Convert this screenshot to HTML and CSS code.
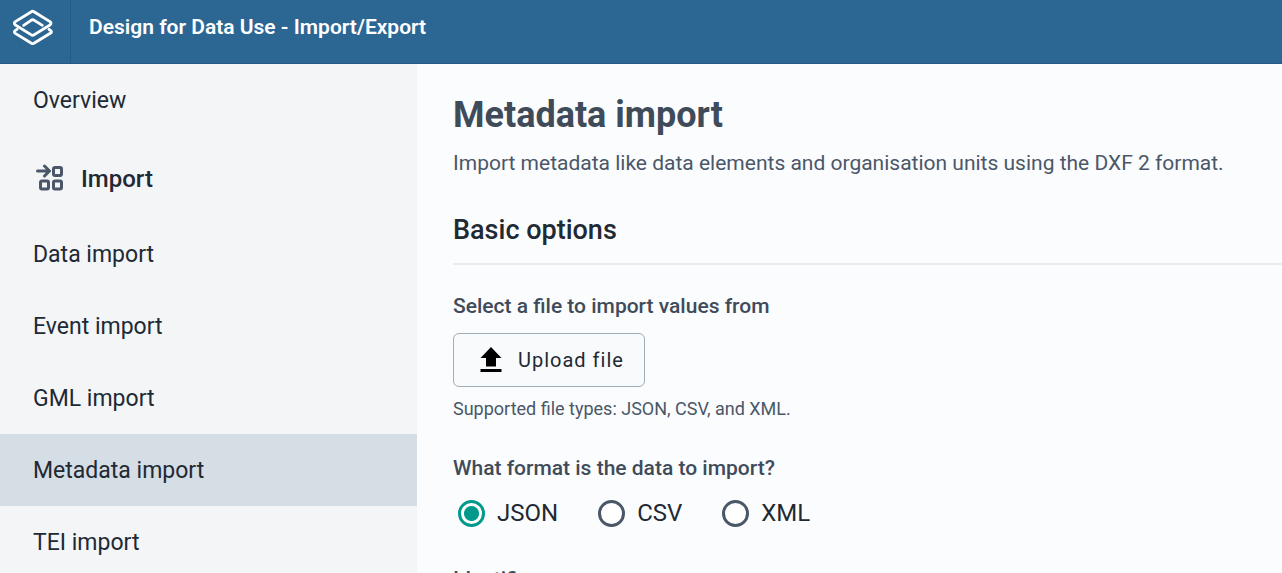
FILE: index.html
```html
<!DOCTYPE html>
<html lang="en">
<head>
<meta charset="utf-8">
<title>Import/Export</title>
<link rel="stylesheet" href="styles.css">
</head>
<body>
<header class="topbar">
  <a class="topbar-logo" href="#" aria-label="Home">
    <svg width="40" height="36" viewBox="39 27 120 108" fill="none" stroke="#fff" stroke-width="8.500" stroke-linecap="round" stroke-linejoin="round">
      <path d="M93 36Q98 32 103 36L150 65Q156 70 150 75L103 104Q98 108 93 104L46 75Q40 70 46 65Z"/>
      <path d="M71 76L93 61Q98 57 103 61L127 76"/>
      <path d="M51 88L45 92Q41 96 46 100L93 129Q98 133 103 129L151 100Q157 96 152 92L147 88"/>
    </svg>
  </a>
  <div class="topbar-title">Design for Data Use - Import/Export</div>
</header>
<div class="layout">
  <nav class="sidebar">
    <a class="nav-item" href="#">Overview</a>
    <div class="nav-heading">
      <svg class="nav-icon" width="28" height="28" viewBox="0 1 28 28" fill="none" stroke="#4a5768" stroke-width="3" stroke-linecap="round" stroke-linejoin="round">
        <path d="M1.500 8H13M8.500 3L13.500 8L8.500 13"/>
        <rect x="17.500" y="4.500" width="8" height="8" rx="1.500"/>
        <rect x="4.500" y="18" width="8" height="8" rx="1.500"/>
        <rect x="17.500" y="18" width="8" height="8" rx="1.500"/>
      </svg>
      <span>Import</span>
    </div>
    <a class="nav-item" href="#">Data import</a>
    <a class="nav-item" href="#">Event import</a>
    <a class="nav-item" href="#">GML import</a>
    <a class="nav-item nav-item-active" href="#" aria-current="page">Metadata import</a>
    <a class="nav-item" href="#">TEI import</a>
  </nav>
  <main class="content">
    <h1 class="page-title">Metadata import</h1>
    <p class="page-intro">Import metadata like data elements and organisation units using the DXF 2 format.</p>
    <h2 class="section-title">Basic options</h2>
    <form class="form">
      <div class="field">
        <label class="field-label" for="upload">Select a file to import values from</label>
        <button class="upload" id="upload" type="button">
          <svg width="22" height="26" viewBox="0 0 22 26" fill="#000" aria-hidden="true">
            <path d="M11 0L21.500 11H16V19.500H6V11H0.500ZM0.500 22H21.500V25H0.500Z"/>
          </svg>
          <span>Upload file</span>
        </button>
        <p class="help">Supported file types: JSON, CSV, and XML.</p>
      </div>
      <fieldset class="field">
        <legend class="field-label">What format is the data to import?</legend>
        <div class="radios">
          <label class="radio"><input type="radio" name="format" checked>JSON</label>
          <label class="radio"><input type="radio" name="format">CSV</label>
          <label class="radio"><input type="radio" name="format">XML</label>
        </div>
      </fieldset>
      <fieldset class="field">
        <legend class="field-label">Identifier</legend>
      </fieldset>
    </form>
  </main>
</div>
</body>
</html>
```
FILE: styles.css
```css
* {
  box-sizing: border-box;
}

html,
body {
  height: 100%;
}

body {
  margin: 0;
  display: flex;
  flex-direction: column;
  overflow: hidden;
  font-family: Roboto, "Liberation Sans", sans-serif;
  color: #212934;
  background: #fbfcfd;
}

.topbar {
  display: flex;
  flex: none;
  height: 64px;
  background: #2c6693;
  border-bottom: 1px solid #265a83;
  color: #fff;
}

.topbar-logo {
  display: flex;
  padding: 9px 17px 0 13px;
  border-right: 1px solid #265a83;
}

.topbar-title {
  padding: 12px 18px;
  font-size: 21px;
  line-height: 30px;
  font-weight: 600;
}

.layout {
  display: flex;
  flex: 1;
  min-height: 0;
}

.sidebar {
  flex: none;
  width: 417px;
  background: #f3f5f7;
}

.nav-item {
  display: block;
  padding: 22px 33px 20px;
  font-size: 23px;
  line-height: 30px;
  color: #212934;
  text-decoration: none;
}

.nav-item-active {
  background: #d5dde5;
}

.nav-heading {
  display: flex;
  align-items: flex-start;
  gap: 17px;
  padding: 28px 36px 24px;
  font-size: 24px;
  line-height: 30px;
  font-weight: 500;
}

.nav-icon {
  display: block;
}

.content {
  flex: 1;
  min-width: 0;
  padding: 30px 0 0 36px;
  overflow: hidden;
}

.page-title {
  margin: 0;
  font-size: 36px;
  line-height: 42px;
  font-weight: 700;
  color: #404b5a;
}

.page-intro {
  margin: 12px 0 36px;
  font-size: 21px;
  line-height: 30px;
  color: #4a5768;
}

.section-title {
  margin: 0;
  padding-bottom: 17px;
  border-bottom: 2px solid #e8edf2;
  font-size: 27px;
  line-height: 32px;
  font-weight: 500;
}

.form {
  display: flex;
  flex-direction: column;
  gap: 32px;
  padding-top: 26px;
}

.field {
  display: block;
  margin: 0;
  padding: 0;
  border: 0;
}

.field-label {
  display: block;
  padding: 0;
  font-size: 21px;
  line-height: 30px;
  font-weight: 500;
  color: #404b5a;
}

.upload {
  display: flex;
  align-items: center;
  gap: 16px;
  height: 54px;
  margin-top: 12px;
  padding: 0 20px 0 26px;
  border: 1px solid #a0adba;
  border-radius: 6px;
  background: #f9fafb;
  color: #212934;
  font-family: inherit;
  font-size: 20px;
  letter-spacing: 1px;
}

.help {
  margin: 10px 0 0;
  font-size: 18px;
  line-height: 24px;
  color: #4a5768;
}

.radios {
  display: flex;
  gap: 40px;
  padding: 15px 5px 4px;
}

.radio {
  display: flex;
  align-items: center;
  gap: 12px;
  font-size: 24px;
  line-height: 30px;
}

.radio input {
  appearance: none;
  width: 27px;
  height: 27px;
  margin: 0;
  border: 3px solid #4a5768;
  border-radius: 50%;
  background: #fff;
}

.radio input:checked {
  border-color: #00998a;
  background: radial-gradient(circle, #00998a 7px, #fff 8px);
}
```
